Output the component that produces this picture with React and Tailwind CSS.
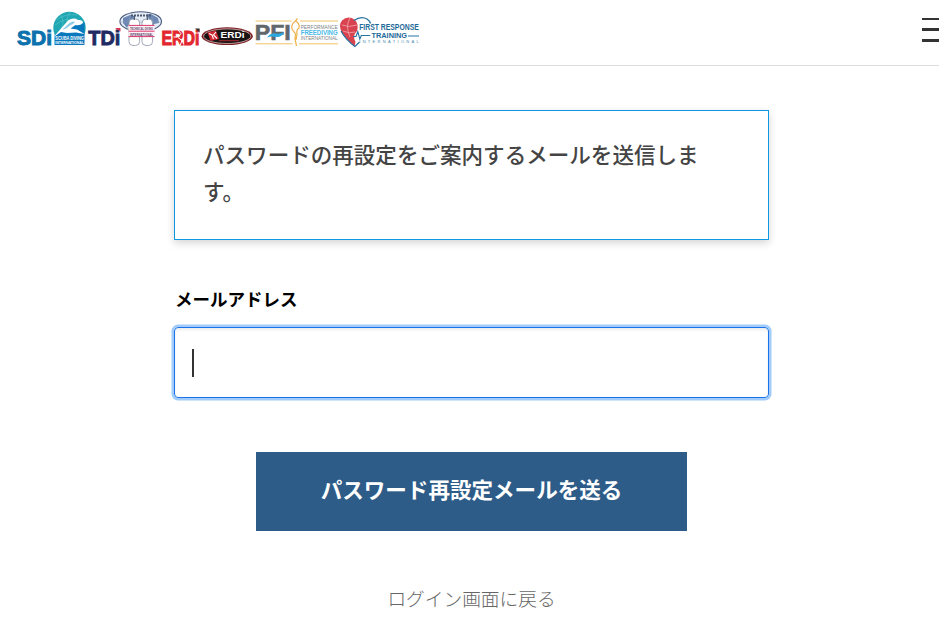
const SdiLogo = () => (
  <g>
    <circle cx="69.5" cy="28" r="16.2" fill="#1fa7b3" />
    <path d="M57 20 q8 -7 20 -5 M55 25 q10 -8 22 -5 M61 15 q4 8 0 14 M70 12 q-4 6 -3 10" stroke="#5cc3ca" strokeWidth="0.6" fill="none" />
    <path d="M54.5 45 V35 L61 29 L68 22 Q76 17 84.5 23 V45 Z" fill="#0a78bd" />
    <path d="M53.5 37 L61 28.5 L68 20.5 Q74 17 78 20 Q83 19.5 83 23 Q80 26 75.5 25 L70.5 28.5 L77 29.5 L84.5 34 L76 32.5 L67 33 L61 32 Z" fill="#fff" />
    <path d="M62 30 L69.5 23 Q73 20.5 75 22 Q73 24.5 70 25.5 L66 28.5 Z" fill="#8ccbe6" />
    <text x="17" y="45" fontSize="21" fontWeight="900" textLength="35" lengthAdjust="spacingAndGlyphs" fill="#0b72ad" stroke="#0b72ad" strokeWidth="1">
      SDi
    </text>
    <text x="55.3" y="40.4" fontSize="6.2" fontWeight="700" textLength="28.6" lengthAdjust="spacingAndGlyphs" fill="#fff">
      SCUBA DIVING
    </text>
    <text x="55.3" y="44" fontSize="3" fontWeight="700" textLength="28.6" lengthAdjust="spacingAndGlyphs" fill="#fff">
      INTERNATIONAL
    </text>
  </g>
);

const TdiLogo = () => (
  <g>
    <text x="88.3" y="45" fontSize="21" fontWeight="900" textLength="32" lengthAdjust="spacingAndGlyphs" fill="#202a63" stroke="#202a63" strokeWidth="0.9">
      TDi
    </text>
    <path d="M115 28 h5.5 v3.6 z" fill="#d9304f" />
    <ellipse cx="140.7" cy="21.5" rx="20.8" ry="9.8" fill="#e4edf6" stroke="#4b5b7d" strokeWidth="1.1" />
    <path d="M123 18 l7 -3 5 1 -2 4 -4 4 -2 4 -4 -5z M147 14 l4 0 7 4 1 5 -5 1 -2 4 -2 -5z" fill="#6b87b2" />
    <path d="M121 22 h40 M132 13 q-6 9 0 17 M150 13 q6 9 0 17" stroke="#8b9dba" strokeWidth="0.5" fill="none" />
    <rect x="129" y="19" width="10.6" height="26.5" rx="4" fill="#fff" stroke="#8c94a6" strokeWidth="0.8" />
    <rect x="142" y="19" width="10.6" height="26.5" rx="4" fill="#fff" stroke="#8c94a6" strokeWidth="0.8" />
    <path d="M131 15.5 h20" stroke="#4b566f" strokeWidth="1.8" strokeDasharray="2 1" />
    <path d="M134.3 16 v4 M147.3 16 v4" stroke="#4b566f" strokeWidth="1.2" />
    <rect x="128.5" y="25" width="26" height="11.8" fill="#fdf0f4" />
    <path d="M128.5 25.4 h26 M128.5 31.2 h26 M128.5 36.6 h26" stroke="#d8386a" strokeWidth="1" />
    <text x="130" y="29.9" fontSize="4" fontWeight="700" textLength="23" lengthAdjust="spacingAndGlyphs" fill="#5d426f">
      TECHNICAL DIVING
    </text>
    <text x="130" y="35.5" fontSize="4" fontWeight="700" textLength="23" lengthAdjust="spacingAndGlyphs" fill="#5d426f">
      INTERNATIONAL
    </text>
  </g>
);

const ErdiLogo = () => (
  <g>
    <text x="161.5" y="45" fontSize="21" fontWeight="900" textLength="38" lengthAdjust="spacingAndGlyphs" fill="#e3272f" stroke="#e3272f" strokeWidth="1.1">
      ERDi
    </text>
    <path d="M173.5 37 h3.5 M178 30 l3 3.5 -3 4 4 3 -2 5" stroke="#fff" strokeWidth="1" fill="none" />
    <path d="M195 28.5 h4.6 v4 z" fill="#35282a" />
  </g>
);

const ErdiBadge = () => (
  <g>
    <ellipse cx="227.2" cy="36.2" rx="25.6" ry="8.9" fill="#7c1f25" />
    <ellipse cx="227.2" cy="36.2" rx="23.6" ry="7.3" fill="#191515" stroke="#d9bdb9" strokeWidth="0.8" />
    <path d="M207.5 32.5 l8.5 -2 3 8.5 -8.5 2z" fill="#cf2733" />
    <path d="M209 33.5 l3 1.5 1.5 4 M216 32 l-2.5 3 3.5 3.5" stroke="#fff" strokeWidth="1.1" fill="none" />
    <text x="220.5" y="38.4" fontSize="8.4" fontWeight="900" textLength="24" lengthAdjust="spacingAndGlyphs" fill="#fff">
      ERDi
    </text>
    <path d="M219 40.7 h20" stroke="#a92730" strokeWidth="1" />
  </g>
);

const PfiLogo = () => (
  <g>
    <path d="M255.5 21 h36 M255.5 43.8 h37 M300 21 h38 M299 43.8 h39" stroke="#f0c468" strokeWidth="1" />
    <text x="254.8" y="40" fontSize="21.5" fontWeight="900" textLength="36" lengthAdjust="spacingAndGlyphs" fill="#62676c" stroke="#62676c" strokeWidth="0.6">
      PFI
    </text>
    <path d="M267 37.5 q4 -5 9 -4 q4 1 8 -1.5 q-2 5.5 -8 5 q-5 -1 -9 0.5z" fill="#29a9e0" />
    <path d="M297.5 18.5 L295 21.5 Q291 24 292 29 L295.5 34 L295 39 L296.5 46 M296 21 Q300 24 299 28 Q296 30 297 34 L296 40" stroke="#efb34d" strokeWidth="1.2" fill="none" />
    <text x="300.7" y="28.8" fontSize="6" textLength="37" lengthAdjust="spacingAndGlyphs" fill="#7d8286">
      PERFORMANCE
    </text>
    <text x="300.7" y="35" fontSize="6.6" fontWeight="700" textLength="37" lengthAdjust="spacingAndGlyphs" fill="#49b8e9">
      FREEDIVING
    </text>
    <text x="300.7" y="40" fontSize="4.8" textLength="37" lengthAdjust="spacingAndGlyphs" fill="#7d8286">
      INTERNATIONAL
    </text>
  </g>
);

const FrtLogo = () => (
  <g>
    <path d="M354.5 46.5 Q347 40 342 33 Q338 25 342 20.5 Q348 15 355 20 Q359 24 357 31 Q352 36 355.5 42 Z" fill="#d94350" />
    <path d="M342 25 q7 3 15 0 M343 31 q6 3 12 1 M350 18 q-5 8 0 19" stroke="#f1aaae" strokeWidth="0.8" fill="none" />
    <path d="M341 31 Q346 40 355 46.5 L359.5 42 M354 20.5 Q361 15.5 367 19 Q370 21 370.5 23.5" stroke="#28719e" strokeWidth="1.3" fill="none" />
    <path d="M353 36.5 h3 l1.8 -5 2 7.5 1.5 -3.5 h9 M408 36 h11" stroke="#2474a4" strokeWidth="1.1" fill="none" />
    <text x="359.2" y="30.2" fontSize="8.8" fontWeight="700" textLength="59.6" lengthAdjust="spacingAndGlyphs" fill="#1e6998">
      FIRST RESPONSE
    </text>
    <text x="371.5" y="38" fontSize="7.8" fontWeight="700" textLength="35.5" lengthAdjust="spacingAndGlyphs" fill="#1e6998">
      TRAINING
    </text>
    <text x="359.2" y="42.6" fontSize="4" textLength="59.6" fill="#4788ac">
      INTERNATIONAL
    </text>
  </g>
);

const Header = () => (
  <header className="flex h-[66px] justify-between overflow-hidden border-b border-[#dcdcdc]">
    <a href="#" className="ml-3.5 mt-2 block">
      <svg
        width="408"
        height="42"
        viewBox="14 8 408 42"
        fontFamily="'Liberation Sans', sans-serif"
      >
        <SdiLogo />
        <TdiLogo />
        <ErdiLogo />
        <ErdiBadge />
        <PfiLogo />
        <FrtLogo />
      </svg>
    </a>
    <button aria-label="menu" className="flex w-[17px] flex-col pt-[18px]">
      <span className="h-0.5 w-full bg-[#333]" />
      <span className="mt-2 h-[3px] w-full bg-[#333]" />
      <span className="mt-2 h-[3px] w-full bg-[#333]" />
    </button>
  </header>
);

export default function App() {
  return (
    <div className="h-[624px] overflow-hidden bg-white font-['Noto_Sans_CJK_JP',sans-serif]">
      <Header />
      <main className="ml-[174px] mt-11 flex w-[595px] flex-col">
        <p className="h-[130px] border border-[#0d99e0] pl-[28px] pt-6 text-[21.56px] font-medium leading-[37px] text-[#444] shadow-[0_3px_8px_rgba(0,0,0,0.17)]">
          パスワードの再設定をご案内するメールを送信しま
          <br />
          す。
        </p>
        <label className="mt-[45px] pl-px text-[17.5px] font-bold leading-7 text-black">
          メールアドレス
        </label>
        <div className="mt-3.5 flex h-[71px] items-center rounded border border-[#1a73e8] pl-[17px] shadow-[0_0_0_2.5px_#a0cbfa,inset_0_2px_3px_rgba(0,0,0,0.08)]">
          <span className="h-7 w-0.5 bg-[#333]" />
        </div>
        <button className="mt-[54px] h-[79px] w-[431px] self-center bg-[#2d5c88] pb-1 text-[21.56px] font-bold text-white">
          パスワード再設定メールを送る
        </button>
        <a
          href="#"
          className="mt-[53px] self-center text-[18.7px] font-light leading-7 text-[#666]"
        >
          ログイン画面に戻る
        </a>
      </main>
    </div>
  );
}
